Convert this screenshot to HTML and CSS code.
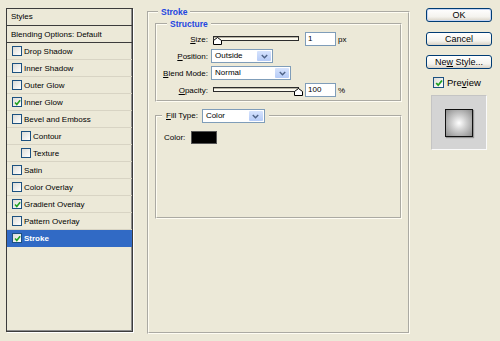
FILE: index.html
```html
<!DOCTYPE html>
<html lang="en">
<head>
  <meta charset="UTF-8">
  <title>Layer Style - Stroke</title>
  <link rel="stylesheet" href="styles.css">
</head>
<body>
  <div class="dialog">
    <div class="styles-list">
      <div class="list-head">Styles</div>
      <div class="list-row blend">Blending Options: Default</div>
      <div class="list-row"><span class="cb"></span>Drop Shadow</div>
      <div class="list-row"><span class="cb"></span>Inner Shadow</div>
      <div class="list-row"><span class="cb"></span>Outer Glow</div>
      <div class="list-row"><span class="cb"><svg viewBox="0 0 8 8"><polyline points="1.2,4 3.2,6.2 7,1.5"/></svg></span>Inner Glow</div>
      <div class="list-row"><span class="cb"></span>Bevel and Emboss</div>
      <div class="list-row sub"><span class="cb"></span>Contour</div>
      <div class="list-row sub"><span class="cb"></span>Texture</div>
      <div class="list-row"><span class="cb"></span>Satin</div>
      <div class="list-row"><span class="cb"></span>Color Overlay</div>
      <div class="list-row"><span class="cb"><svg viewBox="0 0 8 8"><polyline points="1.2,4 3.2,6.2 7,1.5"/></svg></span>Gradient Overlay</div>
      <div class="list-row"><span class="cb"></span>Pattern Overlay</div>
      <div class="list-row on"><span class="cb"><svg viewBox="0 0 8 8"><polyline points="1.2,4 3.2,6.2 7,1.5"/></svg></span>Stroke</div>
    </div>

    <fieldset class="panel">
      <legend>Stroke</legend>

      <fieldset class="group structure">
        <legend>Structure</legend>
        <div class="field">
          <label><u>S</u>ize:</label>
          <div class="slider">
            <div class="track"></div>
            <svg class="thumb" viewBox="0 0 9 8"><polygon points="0.5,3.5 4.5,0.5 8.5,3.5 8.5,7.5 0.5,7.5"/></svg>
          </div>
          <div class="num">1</div>
          <span class="unit">px</span>
        </div>
        <div class="field">
          <label><u>P</u>osition:</label>
          <div class="select pos">Outside<span class="drop"><svg viewBox="0 0 9 6"><polyline points="1,1 4.5,4.5 8,1"/></svg></span></div>
        </div>
        <div class="field">
          <label><u>B</u>lend Mode:</label>
          <div class="select mode">Normal<span class="drop"><svg viewBox="0 0 9 6"><polyline points="1,1 4.5,4.5 8,1"/></svg></span></div>
        </div>
        <div class="field">
          <label><u>O</u>pacity:</label>
          <div class="slider">
            <div class="track"></div>
            <svg class="thumb end" viewBox="0 0 9 8"><polygon points="0.5,3.5 4.5,0.5 8.5,3.5 8.5,7.5 0.5,7.5"/></svg>
          </div>
          <div class="num">100</div>
          <span class="unit">%</span>
        </div>
      </fieldset>

      <fieldset class="group fill">
        <legend class="fill-legend">
          <label><u>F</u>ill Type:</label>
          <div class="select type">Color<span class="drop"><svg viewBox="0 0 9 6"><polyline points="1,1 4.5,4.5 8,1"/></svg></span></div>
        </legend>
        <div class="fill-body">
          <span>Color:</span>
          <span class="swatch"></span>
        </div>
      </fieldset>
    </fieldset>

    <div class="side">
      <button class="btn default">OK</button>
      <button class="btn">Cancel</button>
      <button class="btn">Ne<u>w</u> Style...</button>
      <div class="preview-check">
        <span class="cb big"><svg viewBox="0 0 8 8"><polyline points="1.2,4 3.2,6.2 7,1.5"/></svg></span>
        <span>Pre<u>v</u>iew</span>
      </div>
      <div class="preview">
        <div class="sample"></div>
      </div>
    </div>
  </div>
</body>
</html>
```

FILE: styles.css
```css
:root {
  --face: #ece9d8;
  --xp-blue: #316ac5;
  --legend-blue: #2346e0;
  --field-border: #7f9db9;
}

body {
  margin: 0;
  background: var(--face);
  font-family: 'Liberation Sans', Arial, sans-serif;
  font-size: 8px;
  color: #000;
}

.dialog {
  display: flex;
  align-items: flex-start;
  padding: 8px 0 0 6px;
}

/* left list of effects */
.styles-list {
  width: 127px;
  height: 324px;
  box-sizing: border-box;
  border: 1px solid #3c3c3c;
  box-shadow: inset -1px -1px 0 #8c8c8c, 1px 1px 0 #fff;
}

.list-head {
  height: 17px;
  box-sizing: border-box;
  line-height: 16px;
  padding-left: 4px;
  border-bottom: 1px solid #3c3c3c;
}

.list-row {
  height: 17px;
  box-sizing: border-box;
  display: flex;
  align-items: center;
  gap: 2px;
  padding-left: 5px;
  border-bottom: 1px solid #d8d4c4;
}

.list-row.blend {
  padding-left: 4px;
  border-bottom: 1px solid #3c3c3c;
}

.list-row.sub {
  padding-left: 14px;
}

.list-row.on {
  background: var(--xp-blue);
  color: #fff;
  font-weight: bold;
  border-bottom-color: var(--xp-blue);
}

.cb {
  width: 10px;
  height: 10px;
  box-sizing: border-box;
  border: 1px solid #1c5180;
  background: linear-gradient(135deg, #dcdcd7, #fff);
  display: flex;
  align-items: center;
  justify-content: center;
  flex: none;
}

.cb svg {
  width: 7px;
  height: 7px;
}

.cb polyline {
  fill: none;
  stroke: #21a121;
  stroke-width: 1.8;
}

.cb.big {
  width: 11px;
  height: 11px;
}

.cb.big svg {
  width: 8px;
  height: 8px;
}

/* middle panel */
fieldset {
  margin: 0;
  min-width: 0;
  box-sizing: border-box;
  border: 2px groove #fffdf3;
}

legend {
  font-size: 8.5px;
  font-weight: bold;
  color: var(--legend-blue);
  line-height: 10px;
  padding: 0 3px;
}

.panel {
  width: 263px;
  height: 327px;
  margin: -1px 0 0 14px;
  padding: 0 6px;
}

.panel > legend {
  margin-left: 3px;
}

.group {
  padding: 0;
}

.structure {
  margin-top: 2px;
  padding: 3px 0;
}

.structure > legend {
  margin-left: 10px;
}

.field {
  display: flex;
  align-items: center;
  height: 14px;
  margin-bottom: 3px;
}

.field:last-child {
  margin-bottom: 0;
}

.field label,
.fill-legend label {
  width: 51px;
  margin-right: 3px;
  text-align: right;
  color: #000;
  font-weight: normal;
  font-size: 8px;
}

.slider {
  position: relative;
  width: 92px;
  height: 14px;
}

.track {
  margin: 4px 0 0 2px;
  width: 86px;
  height: 5px;
  box-sizing: border-box;
  border: 1px solid #2c2c2c;
  background: #fbf9ee;
  box-shadow: inset 0 1px 0 #b8b4a4;
}

.thumb {
  position: absolute;
  left: 2px;
  top: 5px;
  width: 9px;
  height: 8px;
}

.thumb.end {
  left: 83px;
}

.thumb polygon {
  fill: #fff;
  stroke: #000;
  stroke-width: 1;
}

.num {
  width: 31px;
  height: 14px;
  box-sizing: border-box;
  margin-left: 2px;
  border: 1px solid var(--field-border);
  background: #fff;
  padding-left: 2px;
  line-height: 12px;
}

.unit {
  margin-left: 2px;
}

.select {
  position: relative;
  height: 14px;
  box-sizing: border-box;
  border: 1px solid var(--field-border);
  background: #fff;
  padding-left: 3px;
  line-height: 12px;
  color: #000;
  font-weight: normal;
  font-size: 8px;
}

.select.pos { width: 62px; }
.select.mode { width: 80px; }
.select.type { width: 63px; }

.drop {
  position: absolute;
  right: 1px;
  top: 1px;
  width: 14px;
  height: 10px;
  background: linear-gradient(#d6e3fd, #b5cbf7);
  border-radius: 1px;
  display: flex;
  align-items: center;
  justify-content: center;
}

.drop svg {
  width: 7px;
  height: 5px;
}

.drop polyline {
  fill: none;
  stroke: #4d6185;
  stroke-width: 1.8;
}

.fill {
  margin-top: 7px;
}

.fill-legend {
  display: flex;
  align-items: center;
  margin-left: 5px;
  padding: 0 4px;
  line-height: 14px;
}

.fill-legend label {
  width: auto;
  margin-right: 4px;
}

.fill-body {
  height: 94px;
  box-sizing: border-box;
  padding: 8px 0 0 7px;
  display: flex;
  align-items: flex-start;
  gap: 6px;
}

.fill-body span:first-child {
  line-height: 13px;
}

.swatch {
  width: 26px;
  height: 13px;
  box-sizing: border-box;
  background: #000;
  border: 1px solid #555;
}

/* right column */
.side {
  width: 66px;
  margin-left: 16px;
  display: flex;
  flex-direction: column;
  align-items: flex-start;
}

.btn {
  width: 66px;
  height: 14px;
  padding: 0;
  border: 1px solid #003c74;
  border-radius: 3px;
  background: linear-gradient(#fff, #f4f3ee 65%, #d8d2c6);
  font-family: 'Liberation Sans', Arial, sans-serif;
  font-size: 9px;
  line-height: 12px;
  color: #000;
  margin-bottom: 10px;
}

.btn + .btn {
  margin-bottom: 9px;
}

.btn + .btn + .btn {
  margin-bottom: 0;
}

.btn.default {
  box-shadow: inset 0 0 0 1px #c5d5f5;
}

.preview-check {
  display: flex;
  align-items: center;
  gap: 3px;
  margin: 8px 0 0 7px;
  font-size: 9.5px;
  height: 11px;
}

.preview {
  width: 56px;
  height: 55px;
  box-sizing: border-box;
  margin: 7px 0 0 5px;
  background: #d4d4d4;
  border: 1px solid #fafafa;
  border-top-color: #c4c4c4;
  border-left-color: #c4c4c4;
  display: flex;
  align-items: center;
  justify-content: center;
}

.sample {
  width: 28px;
  height: 28px;
  box-sizing: border-box;
  border: 1px solid #111;
  background: radial-gradient(circle, #fff 0, #cfcfcf 40%, #8c8c8c 100%);
  box-shadow: 1px 1px 1px rgba(0, 0, 0, 0.3);
}
```
